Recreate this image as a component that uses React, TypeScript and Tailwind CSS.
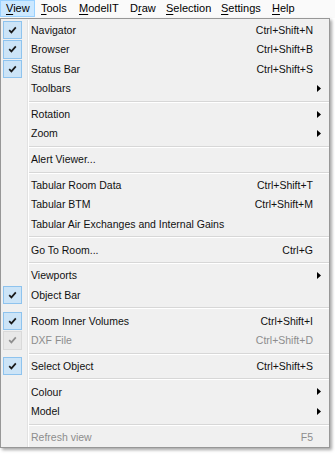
import React from "react";

type Item =
  | { kind: "sep" }
  | {
      kind: "item";
      label: string;
      shortcut?: string;
      check?: "on" | "off";
      sub?: boolean;
      disabled?: boolean;
    };

const items: Item[] = [
  { kind: "item", label: "Navigator", shortcut: "Ctrl+Shift+N", check: "on" },
  { kind: "item", label: "Browser", shortcut: "Ctrl+Shift+B", check: "on" },
  { kind: "item", label: "Status Bar", shortcut: "Ctrl+Shift+S", check: "on" },
  { kind: "item", label: "Toolbars", sub: true },
  { kind: "sep" },
  { kind: "item", label: "Rotation", sub: true },
  { kind: "item", label: "Zoom", sub: true },
  { kind: "sep" },
  { kind: "item", label: "Alert Viewer..." },
  { kind: "sep" },
  { kind: "item", label: "Tabular Room Data", shortcut: "Ctrl+Shift+T" },
  { kind: "item", label: "Tabular BTM", shortcut: "Ctrl+Shift+M" },
  { kind: "item", label: "Tabular Air Exchanges and Internal Gains" },
  { kind: "sep" },
  { kind: "item", label: "Go To Room...", shortcut: "Ctrl+G" },
  { kind: "sep" },
  { kind: "item", label: "Viewports", sub: true },
  { kind: "item", label: "Object Bar", check: "on" },
  { kind: "sep" },
  { kind: "item", label: "Room Inner Volumes", shortcut: "Ctrl+Shift+I", check: "on" },
  { kind: "item", label: "DXF File", shortcut: "Ctrl+Shift+D", check: "on", disabled: true },
  { kind: "sep" },
  { kind: "item", label: "Select Object", shortcut: "Ctrl+Shift+S", check: "on" },
  { kind: "sep" },
  { kind: "item", label: "Colour", sub: true },
  { kind: "item", label: "Model", sub: true },
  { kind: "sep" },
  { kind: "item", label: "Refresh view", shortcut: "F5", disabled: true },
];

const menuBar: { pre: string; u: string; post: string; w: string; active?: boolean }[] = [
  { pre: "", u: "V", post: "iew", w: "w-[35px]", active: true },
  { pre: "", u: "T", post: "ools", w: "w-[38px]" },
  { pre: "", u: "M", post: "odelIT", w: "w-[51px]" },
  { pre: "D", u: "r", post: "aw", w: "w-[36px]" },
  { pre: "", u: "S", post: "election", w: "w-[55px]" },
  { pre: "", u: "S", post: "ettings", w: "w-[51px]" },
  { pre: "", u: "H", post: "elp", w: "w-[40px]" },
];

function Check({ disabled }: { disabled?: boolean }) {
  return (
    <div
      className={
        "flex h-[18.5px] w-[19px] items-center justify-center border " +
        (disabled ? "border-[#d9d9d9] bg-[#e8e8e8]" : "border-[#8ec3ee] bg-[#cce4f7]")
      }
    >
      <svg width="9" height="8" viewBox="0 0 9 8">
        <path
          d="M1.2 4.2 L3.4 6.4 L7.8 1.4"
          fill="none"
          stroke={disabled ? "#8f8f8f" : "#1a1a1a"}
          strokeWidth="1.7"
        />
      </svg>
    </div>
  );
}

function Arrow() {
  return (
    <svg width="4" height="7" viewBox="0 0 4 7">
      <polygon points="0,0 4,3.5 0,7" fill="#000" />
    </svg>
  );
}

export default function App() {
  return (
    <div
      className="h-[454px] w-[335px] overflow-hidden bg-white text-[10.5px] text-black"
      style={{ fontFamily: '"Segoe UI", "Liberation Sans", Arial, sans-serif' }}
    >
      {/* menu bar */}
      <div className="flex h-[18px] bg-[#fafafa] text-[11px]">
        {menuBar.map((m, i) => (
          <div
            key={i}
            className={
              "flex h-[17px] items-center pl-[5px] leading-none " +
              m.w +
              (m.active ? " border border-[#99d1ff] bg-[#cce8ff]" : " border border-transparent")
            }
          >
            <span>
              {m.pre}
              <span className="underline underline-offset-[2px]">{m.u}</span>
              {m.post}
            </span>
          </div>
        ))}
      </div>

      {/* dropdown */}
      <div className="w-[330px] border border-[#979797] bg-[#f0f0f0] pt-[1px] shadow-[2px_2px_3px_rgba(0,0,0,0.35)]">
        {items.map((it, i) =>
          it.kind === "sep" ? (
            <div key={i} className="flex h-[6.25px]">
              <div className="h-full w-[27px] shrink-0 border-r border-[#e2e2e2]" />
              <div className="h-full w-[1px] shrink-0 bg-white" />
              <div className="flex-1 pt-[2.5px]">
                <div className="h-[2px] border-t border-b border-t-[#d7d7d7] border-b-white" />
              </div>
            </div>
          ) : (
            <div key={i} className="flex h-[19.5px] items-center">
              <div className="flex h-full w-[27px] shrink-0 items-center border-r border-[#e2e2e2] pl-[2px]">
                {it.check && <Check disabled={it.disabled} />}
              </div>
              <div className="h-full w-[1px] shrink-0 bg-white" />
              <span
                className={
                  "ml-[2px] whitespace-nowrap leading-none " +
                  (it.disabled ? "text-[#8d8d8d]" : "text-[#111]")
                }
              >
                {it.label}
              </span>
              <span
                className={
                  "ml-auto whitespace-nowrap leading-none " +
                  (it.disabled ? "text-[#8d8d8d]" : "text-[#111]")
                }
              >
                {it.shortcut ?? ""}
              </span>
              <div className="flex w-[16px] shrink-0 items-center pl-[4px]">
                {it.sub && <Arrow />}
              </div>
            </div>
          )
        )}
      </div>
    </div>
  );
}
